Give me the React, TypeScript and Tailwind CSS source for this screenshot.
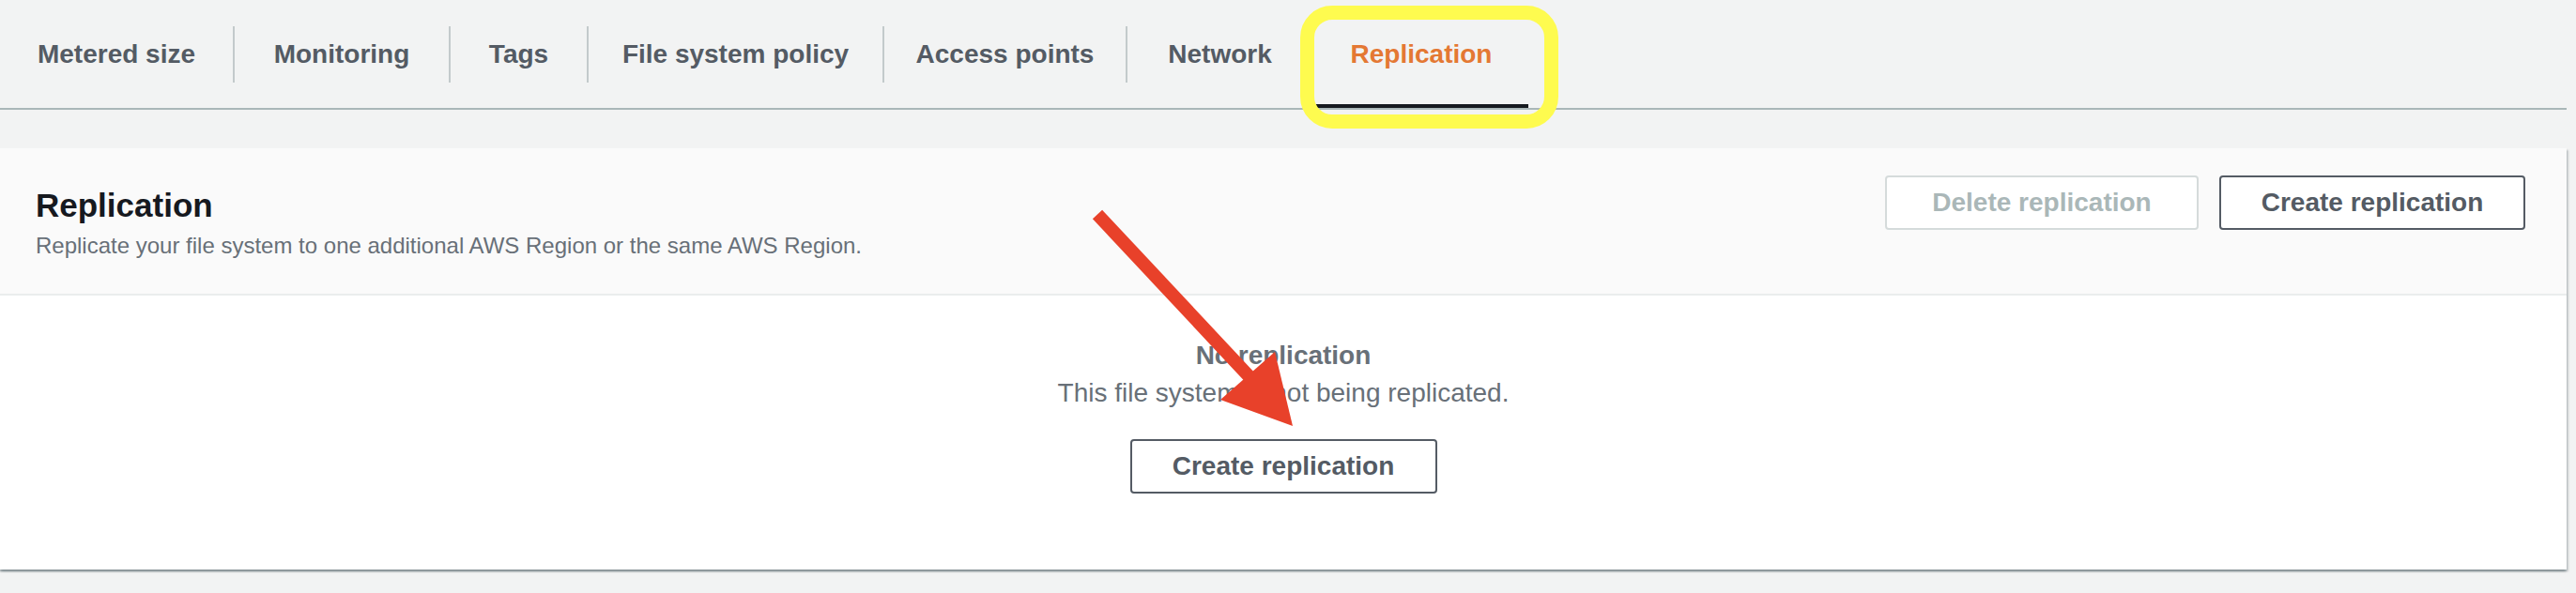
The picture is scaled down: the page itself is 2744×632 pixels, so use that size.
const tabs = [
  { label: 'Metered size', w: 'w-[248px]' },
  { label: 'Monitoring', w: 'w-[228px]' },
  { label: 'Tags', w: 'w-[145px]' },
  { label: 'File system policy', w: 'w-[313px]' },
  { label: 'Access points', w: 'w-[257px]' },
  { label: 'Network', w: 'w-[197px]' },
  { label: 'Replication', w: 'w-[228px]' },
]

function Tab({ label, w, active }: { label: string; w: string; active: boolean }) {
  return (
    <div className={`relative flex items-center justify-center ${w}`}>
      <span
        className={
          active
            ? 'text-[28px] font-bold leading-[40px] text-[#e47833]'
            : 'text-[28px] font-bold leading-[40px] text-[#545b64]'
        }
      >
        {label}
      </span>
      {active && <div className="absolute bottom-0 left-0 right-0 h-[4px] bg-[#16191f]" />}
    </div>
  )
}

export default function App() {
  return (
    <div className="relative h-[632px] w-[2744px] overflow-hidden bg-[#f2f3f3] font-['Liberation_Sans',Arial,sans-serif]">
      <div className="w-[2734px]">
        {/* Tabs */}
        <div className="flex h-[117px] border-b-2 border-[#aab7b8]">
          {tabs.map((t, i) => {
            const active = t.label === 'Replication'
            return (
              <div key={t.label} className="flex">
                {i > 0 && (
                  <div className={active ? 'h-[60px] w-[2px] self-center' : 'h-[60px] w-[2px] self-center bg-[#c3cacb]'} />
                )}
                <Tab label={t.label} w={t.w} active={active} />
              </div>
            )
          })}
        </div>

        {/* Card */}
        <div className="mt-[41px] bg-white shadow-[0_2px_2px_0_rgba(0,28,36,0.3),2px_2px_2px_0_rgba(0,28,36,0.15),-2px_2px_2px_0_rgba(0,28,36,0.15)]">
          <div className="flex items-start justify-between border-b-2 border-[#eaeded] bg-[#fafafa] pb-[35px] pl-[38px] pr-[44px] pt-[29px]">
            <div className="pt-[10px]">
              <h2 className="text-[35px] font-bold leading-[44px] text-[#16191f]">Replication</h2>
              <p className="mt-[5px] text-[24px] leading-[32px] text-[#687078]">
                Replicate your file system to one additional AWS Region or the same AWS Region.
              </p>
            </div>
            <div className="flex gap-[22px]">
              <button className="flex h-[58px] w-[334px] items-center justify-center rounded-[4px] border-2 border-[#d5dbdb] bg-white text-[28px] font-bold text-[#aab7b8]">
                Delete replication
              </button>
              <button className="flex h-[58px] w-[326px] items-center justify-center rounded-[4px] border-2 border-[#545b64] bg-white text-[28px] font-bold text-[#545b64]">
                Create replication
              </button>
            </div>
          </div>

          <div className="flex flex-col items-center pb-[81px] pt-[44px]">
            <p className="text-[28px] font-bold leading-[40px] text-[#687078]">No replication</p>
            <p className="text-[28px] leading-[40px] text-[#687078]">This file system is not being replicated.</p>
            <button className="mt-[29px] flex h-[58px] w-[327px] items-center justify-center rounded-[4px] border-2 border-[#545b64] bg-white text-[28px] font-bold text-[#545b64]">
              Create replication
            </button>
          </div>
        </div>
      </div>

      {/* annotation: highlight box */}
      <div className="absolute left-[1385px] top-[6px] h-[131px] w-[275px] rounded-[34px] border-[15px] border-[#fefb4f]" />

      {/* annotation: arrow */}
      <svg className="pointer-events-none absolute left-0 top-0" width="2744" height="632" viewBox="0 0 2744 632">
        <line x1="1169" y1="228.5" x2="1336" y2="407" stroke="#e8412a" strokeWidth="14" />
        <polygon points="1300,426 1358,375 1377,454" fill="#e8412a" />
      </svg>
    </div>
  )
}
